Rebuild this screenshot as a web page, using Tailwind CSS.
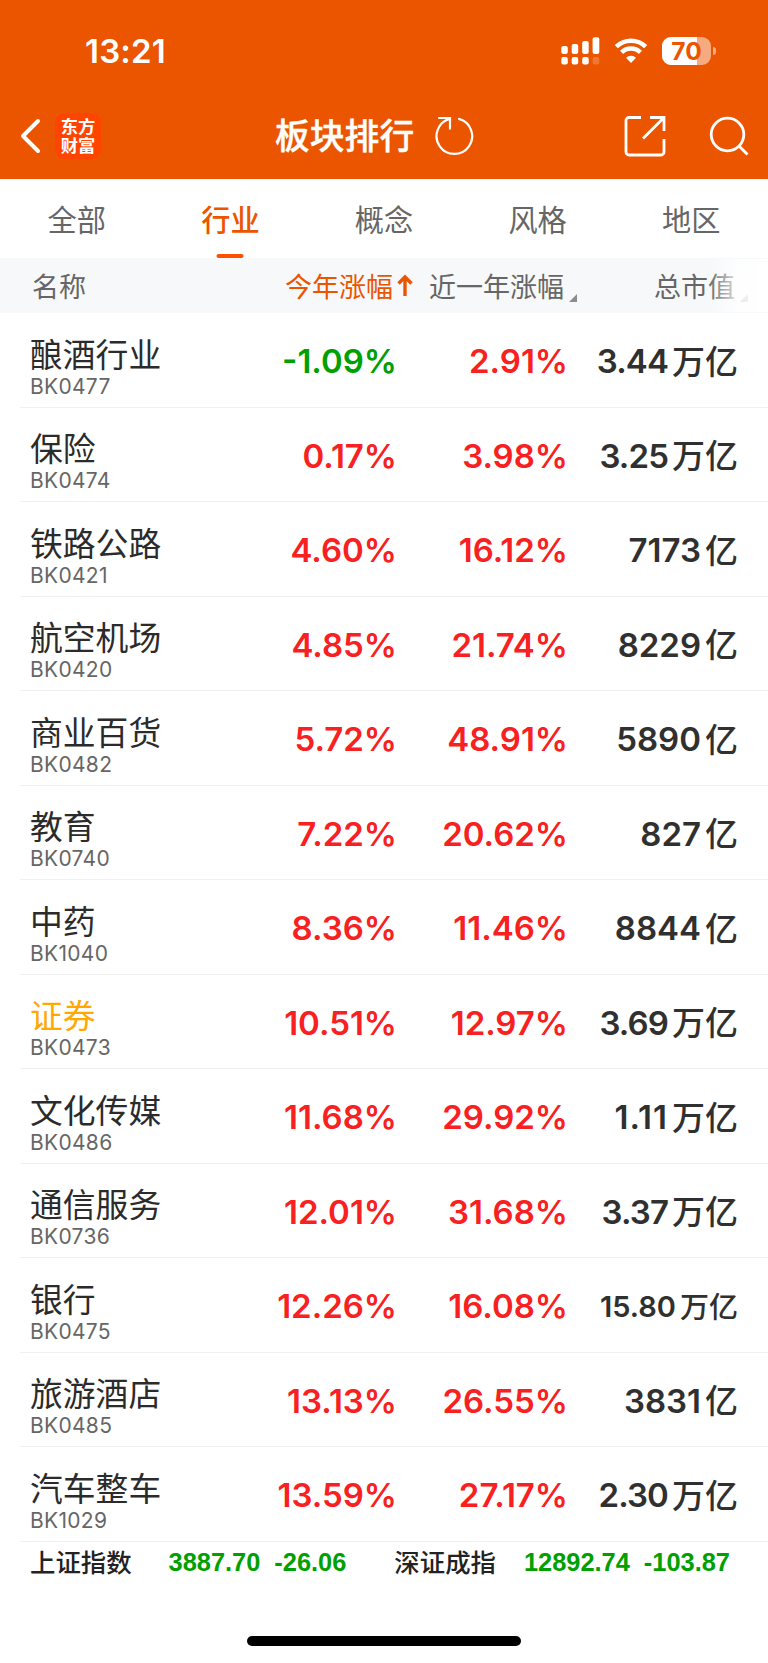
<!DOCTYPE html>
<html lang="zh-CN">
<head>
    <meta charset="UTF-8">
    <meta name="viewport" content="width=device-width, initial-scale=1.0">
    <title>板块排行</title>
    <script src="https://cdn.jsdelivr.net/npm/@tailwindcss/browser@4"></script>
    <style>
        body {
            font-family: 'Inter', 'Noto Sans CJK SC', sans-serif;
        }
    </style>
</head>
<body class="bg-white w-[768px] h-[1663px] overflow-hidden flex flex-col whitespace-nowrap">

<header class="bg-[#eb5500] h-[179px] shrink-0 text-white">
    <!-- status bar -->
    <div class="h-[102px] flex items-center pl-[85px] pr-[52px]">
        <span class="pt-px text-[33px] leading-none font-semibold tracking-[0.2px]">13:21</span>
        <div class="ml-auto flex items-center">
            <svg width="39" height="28" viewBox="0 0 39 28" fill="currentColor">
                <rect x="0.3" y="9" width="6.5" height="8" rx="2"/>
                <rect x="10.7" y="7" width="6.5" height="10" rx="2"/>
                <rect x="21.2" y="4" width="6.5" height="13" rx="2"/>
                <rect x="31.6" y="0.3" width="6.7" height="16.7" rx="2"/>
                <rect x="0.3" y="20" width="6.5" height="7.5" rx="2"/>
                <rect x="10.7" y="20" width="6.5" height="7.5" rx="2"/>
                <rect x="21.2" y="20" width="6.5" height="7.5" rx="2"/>
                <rect x="31.6" y="20" width="6.7" height="7.5" rx="2" opacity="0.2"/>
            </svg>
            <svg class="ml-3.5" width="34" height="26" viewBox="0 0 34 26" fill="none" stroke="currentColor" stroke-width="4.6">
                <path d="M2.3 8.7a21 21 0 0 1 29.4 0"/>
                <path d="M7.6 14.3a13.5 13.5 0 0 1 18.8 0"/>
                <path d="M17 25l-5-5.2a7.3 7.3 0 0 1 10 0z" fill="currentColor" stroke="none"/>
            </svg>
            <div class="ml-[14px] relative w-[49px] h-[28px] rounded-[9px] overflow-hidden bg-[#f5aa80] flex items-center justify-center">
                <div class="absolute left-0 top-0 w-[35px] h-full bg-white"></div>
                <span class="relative text-[24.5px] leading-none font-bold text-[#eb5500]">70</span>
            </div>
            <div class="ml-0.5 w-[3px] h-[8px] rounded-r-full bg-[#f5aa80]"></div>
        </div>
    </div>

    <!-- title bar -->
    <div class="h-[68px] flex items-center pl-5 pr-[19px]">
        <svg width="22" height="36" viewBox="0 0 22 36" fill="none" stroke="currentColor" stroke-width="4" stroke-linecap="round" stroke-linejoin="round">
            <path d="M18 3L3 18 18 33"/>
        </svg>
        <div class="ml-[13px] w-[46px] h-[46px] rounded-[9px] bg-[#ff4400] flex flex-col items-center justify-center text-[17.3px] leading-[19px] font-bold">
            <span>东方</span>
            <span>财富</span>
        </div>
        <h1 class="ml-[174px] pt-px text-[34.8px] leading-none font-medium [-webkit-text-stroke:0.4px_white]">板块排行</h1>
        <svg class="ml-[21px]" width="40" height="40" viewBox="0 0 40 40" fill="none" stroke="currentColor" stroke-width="2.2">
            <path d="M24 2.9A17.8 17.8 0 1 1 14.7 2.9" stroke-linecap="round"/>
            <path d="M3.2 2H15v11.5"/>
        </svg>
        <svg class="ml-auto" width="42" height="42" viewBox="0 0 42 42" fill="none" stroke="currentColor" stroke-width="2.8">
            <path d="M17 2.5H5a3 3 0 0 0-3 3V37a3 3 0 0 0 3 3h32a3 3 0 0 0 3-3V24"/>
            <path d="M26 2.5h14V16M40 2.5L19 23.5"/>
        </svg>
        <svg class="ml-[43px]" width="40" height="40" viewBox="0 0 40 40" fill="none" stroke="currentColor" stroke-width="2.8">
            <circle cx="18.5" cy="18.5" r="16.3"/>
            <path d="M30 30l8.5 8.5"/>
        </svg>
    </div>
</header>

<nav class="h-[79px] shrink-0 grid grid-cols-5 grid-rows-[79px] text-center text-[29.2px] leading-[83px] text-[#666]">
    <div>全部</div>
    <div class="relative font-medium text-[#eb5500]">
        行业
        <span class="absolute left-1/2 -translate-x-1/2 bottom-0 w-[27px] h-[4px] rounded-full bg-[#ff5000]"></span>
    </div>
    <div>概念</div>
    <div>风格</div>
    <div>地区</div>
</nav>

<!-- table head -->
<div class="relative h-[55px] shrink-0 bg-[#f7f8fa] flex items-center pl-8 pr-[20px] pt-[3px] text-[27px] leading-none text-[#666]">
    <span>名称</span>
    <span class="ml-auto flex items-center text-[#eb5500]">
        今年涨幅
        <svg class="ml-[4px] -mt-[4px]" width="16" height="22" viewBox="0 0 16 22" fill="none" stroke="currentColor" stroke-width="3.4">
            <path d="M8 22V3M1.5 9.5L8 3l6.5 6.5"/>
        </svg>
    </span>
    <span class="ml-[16px] flex items-center">
        近一年涨幅
        <svg class="ml-[5px] mt-[21px]" width="8" height="8" viewBox="0 0 8 8" fill="#8c8c8c"><path d="M8 0v8H0z"/></svg>
    </span>
    <span class="ml-[77px] flex items-center">
        总市值
        <svg class="ml-[5px] mt-[21px]" width="8" height="8" viewBox="0 0 8 8" fill="#8c8c8c"><path d="M8 0v8H0z"/></svg>
    </span>
    <div class="absolute right-0 top-px bottom-px w-[60px] bg-linear-to-r from-white/0 via-white/80 via-50% to-white"></div>
</div>

<main id="sectorList" class="shrink-0"></main>

<footer class="shrink-0 h-[42px] flex items-center pl-[30px] text-[25.4px] leading-none font-medium text-[#222]">
    <span>上证指数</span>
    <span class="ml-[37px] font-[Liberation_Sans] font-bold text-[#00a000]">3887.70</span>
    <span class="ml-[14px] font-[Liberation_Sans] font-bold text-[#00a000]">-26.06</span>
    <span class="ml-[48px]">深证成指</span>
    <span class="ml-[28px] font-[Liberation_Sans] font-bold text-[#00a000]">12892.74</span>
    <span class="ml-[14px] font-[Liberation_Sans] font-bold text-[#00a000]">-103.87</span>
</footer>

<div class="mt-[52px] ml-[247px] w-[274px] h-[10px] shrink-0 rounded-full bg-black"></div>

<script>
    const sectors = [
        ['酿酒行业', 'BK0477', '-1.09%', '2.91%', '3.44', '万亿'],
        ['保险', 'BK0474', '0.17%', '3.98%', '3.25', '万亿'],
        ['铁路公路', 'BK0421', '4.60%', '16.12%', '7173', '亿'],
        ['航空机场', 'BK0420', '4.85%', '21.74%', '8229', '亿'],
        ['商业百货', 'BK0482', '5.72%', '48.91%', '5890', '亿'],
        ['教育', 'BK0740', '7.22%', '20.62%', '827', '亿'],
        ['中药', 'BK1040', '8.36%', '11.46%', '8844', '亿'],
        ['证券', 'BK0473', '10.51%', '12.97%', '3.69', '万亿'],
        ['文化传媒', 'BK0486', '11.68%', '29.92%', '1.11', '万亿'],
        ['通信服务', 'BK0736', '12.01%', '31.68%', '3.37', '万亿'],
        ['银行', 'BK0475', '12.26%', '16.08%', '15.80', '万亿'],
        ['旅游酒店', 'BK0485', '13.13%', '26.55%', '3831', '亿'],
        ['汽车整车', 'BK1029', '13.59%', '27.17%', '2.30', '万亿'],
    ];

    const color = (value) => value.startsWith('-') ? 'text-[#00a000]' : 'text-[#f82020]';

    // long market caps are set smaller so they stay inside the column
    const capSize = (cap) => {
        if (cap.length > 4) return 'text-[29px]';
        if (cap === '1.11') return 'tracking-[1px]';
        return cap.includes('.') ? 'tracking-[-0.9px]' : '';
    };

    document.getElementById('sectorList').innerHTML = sectors.map(([name, code, year, last, cap, unit]) => `
        <div class="ml-5 h-[94.5px] border-b border-[#f0f0f1] grid grid-cols-[207px_170px_171px_170px] items-center text-right text-[33px] leading-none font-semibold">
            <div class="pl-2.5 pt-[15px] text-left font-normal">
                <div class="text-[32.8px] leading-[36px] ${name === '证券' ? 'text-[#ffa800]' : 'text-[#2b2b2b]'}">${name}</div>
                <div class="mt-[3px] text-[21px] leading-[22px] tracking-[0.3px] text-[#666]">${code}</div>
            </div>
            <div class="pt-1 ${color(year)}">${year}</div>
            <div class="pt-1 ${color(last)}">${last}</div>
            <div class="pt-1 text-[#303030] flex items-center justify-end ${cap.length > 4 ? 'text-[29px]' : ''}">
                <span class="${capSize(cap)}">${cap}</span><span class="ml-[4px] pt-px font-medium">${unit}</span>
            </div>
        </div>`).join('');
</script>
</body>
</html>
